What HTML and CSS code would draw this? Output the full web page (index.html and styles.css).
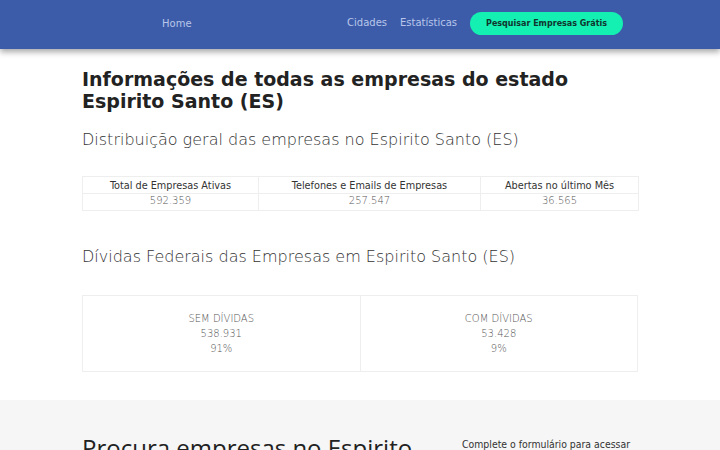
FILE: index.html
```html
<!DOCTYPE html>
<html lang="pt-BR">
<head>
<meta charset="utf-8">
<link rel="stylesheet" href="styles.css">
</head>
<body>
<header class="topbar">
  <nav class="nav">
    <a class="nav-home" href="#">Home</a>
    <div class="nav-right">
      <a class="nav-link" href="#">Cidades</a>
      <a class="nav-link" href="#">Estatísticas</a>
      <a class="nav-btn" href="#">Pesquisar Empresas Grátis</a>
    </div>
  </nav>
</header>
<main class="container">
  <h1 class="title">Informações de todas as empresas do estado Espirito Santo (ES)</h1>
  <h2 class="subtitle">Distribuição geral das empresas no Espirito Santo (ES)</h2>
  <table class="stats">
    <colgroup>
      <col class="c1"><col class="c2"><col class="c3">
    </colgroup>
    <tr>
      <th>Total de Empresas Ativas</th>
      <th>Telefones e Emails de Empresas</th>
      <th>Abertas no último Mês</th>
    </tr>
    <tr>
      <td>592.359</td>
      <td>257.547</td>
      <td>36.565</td>
    </tr>
  </table>
  <h2 class="subtitle debts-title">Dívidas Federais das Empresas em Espirito Santo (ES)</h2>
  <div class="debts">
    <div class="debt">
      <div>SEM DÍVIDAS</div>
      <div>538.931</div>
      <div>91%</div>
    </div>
    <div class="debt">
      <div>COM DÍVIDAS</div>
      <div>53.428</div>
      <div>9%</div>
    </div>
  </div>
</main>
<section class="search">
  <div class="search-inner">
    <h2 class="search-title">Procura empresas no Espirito Santo</h2>
    <p class="search-text">Complete o formulário para acessar</p>
  </div>
</section>
</body>
</html>
```
FILE: styles.css
```css
* { box-sizing: border-box; }
html, body { margin: 0; padding: 0; }
body {
  font-family: "DejaVu Sans", sans-serif;
  background: #fff;
  color: #333;
  width: 720px;
  height: 450px;
  overflow: hidden;
}
a { text-decoration: none; }
.topbar {
  background: #3c5ca9;
  height: 49px;
  box-shadow: 0 3px 6px rgba(0,0,0,0.35);
  position: relative;
  z-index: 2;
}
.nav {
  display: flex;
  align-items: center;
  justify-content: space-between;
  height: 46px;
  padding: 0 97px 0 162px;
}
.nav-home, .nav-link {
  color: #b9c6ea;
  font-size: 10px;
}
.nav-home { margin-top: 1px; }
.nav-right {
  display: flex;
  align-items: center;
}
.nav-link { margin-right: 13px; margin-top: -1px; }
.nav-link:first-child { margin-left: 1px; }
.nav-btn {
  background: #14f0b2;
  color: #10352e;
  font-weight: bold;
  font-size: 8px;
  height: 23px;
  line-height: 23px;
  padding: 0 16px;
  border-radius: 12px;
}
.container {
  width: 556px;
  margin: 0 auto;
  padding-top: 19px;
}
.title {
  font-size: 19px;
  font-weight: bold;
  line-height: 22px;
  margin: 0;
  color: #222;
}
.subtitle {
  font-size: 16px;
  font-weight: 200;
  color: #333;
  margin: 17px 0 0;
  line-height: 22px;
}
.stats {
  width: 100%;
  table-layout: fixed;
  border-collapse: collapse;
  margin-top: 25px;
}
.c1 { width: 176px; }
.c2 { width: 222px; }
.c3 { width: 158px; }
.stats th, .stats td {
  border: 1px solid #eee;
  text-align: center;
  height: 17px;
  padding: 0;
}
.stats th {
  font-family: "DejaVu Sans Condensed", "DejaVu Sans", sans-serif;
  font-size: 10.8px;
  font-weight: normal;
  color: #333;
}
.stats td {
  font-size: 10px;
  font-weight: 200;
  color: #555;
  line-height: 14px;
  vertical-align: top;
}
.debts-title { margin-top: 35px; }
.debts {
  display: flex;
  border: 1px solid #eee;
  margin-top: 27px;
  height: 77px;
}
.debt {
  flex: 1;
  display: flex;
  flex-direction: column;
  align-items: center;
  justify-content: center;
  font-size: 10px;
  font-weight: 200;
  color: #555;
  line-height: 15px;
}
.debt + .debt { border-left: 1px solid #eee; }
.search {
  background: #f6f6f6;
  margin-top: 28px;
  height: 200px;
}
.search-inner {
  width: 556px;
  margin: 0 auto;
  display: flex;
  padding-top: 33px;
}
.search-title {
  font-family: "Open Sans", sans-serif;
  font-weight: normal;
  font-size: 24px;
  color: #222;
  margin: 0;
  width: 380px;
  line-height: 30px;
}
.search-text {
  font-family: "DejaVu Sans Condensed", "DejaVu Sans", sans-serif;
  font-size: 10.4px;
  color: #333;
  margin: 5px 0 0;
}
```
